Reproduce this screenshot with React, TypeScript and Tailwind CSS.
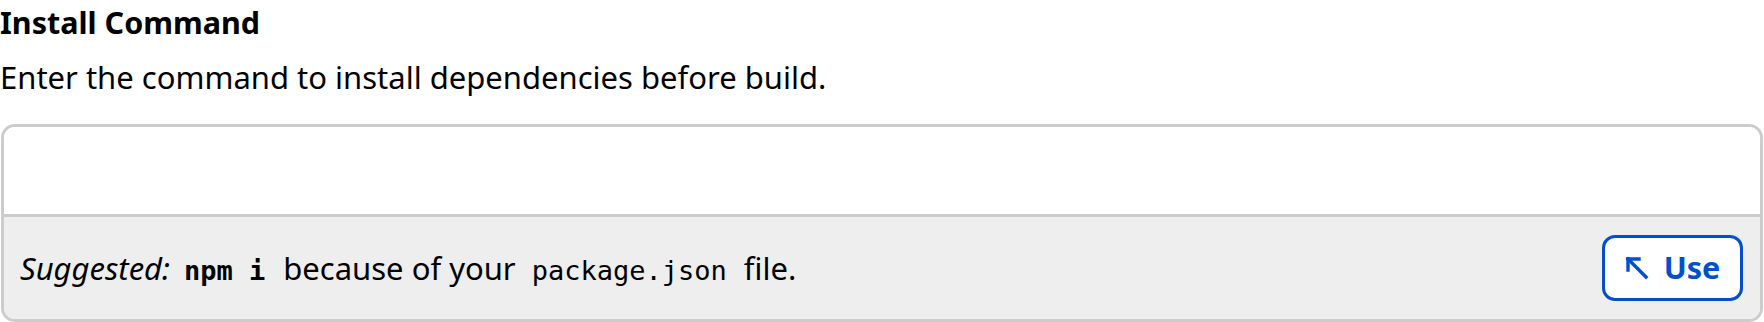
function ArrowIcon() {
  return (
    <svg width="24" height="24" viewBox="0 0 24 24" fill="none" stroke="currentColor" strokeWidth="3.4" strokeLinecap="square">
      <path d="M3 3 L21 21" />
      <path d="M3 3 H14" />
      <path d="M3 3 V14" />
    </svg>
  );
}

function InstallCommand() {
  return (
    <div className="font-['Noto_Sans',sans-serif] text-black bg-white w-[1764px] h-[322px] overflow-hidden">
      <h3 className="text-[30.5px] font-bold leading-[40px] pt-[2px]">Install Command</h3>
      <p className="text-[31px] leading-[40px] mt-[15px]">
        Enter the command to install dependencies before build.
      </p>
      <div className="mt-[27px] ml-[1px] mr-[1px] rounded-[14px] border-[3px] border-[#cccccc] overflow-hidden">
        <input
          type="text"
          className="block w-full h-[90px] bg-white border-b-[3px] border-[#cccccc] outline-none px-4 text-[31px]"
        />
        <div className="flex items-center justify-between h-[102px] bg-[#eeeeee] pl-[16px] pr-[17px]">
          <p className="text-[31px] flex items-baseline">
            <em>Suggested:</em>
            <code className="font-['DejaVu_Sans_Mono',monospace] font-bold text-[27px] ml-[14px] mr-[18px]">npm i</code>
            <span>because of your</span>
            <code className="font-['DejaVu_Sans_Mono',monospace] text-[27px] ml-[16px] mr-[17px]">package.json</code>
            <span>file.</span>
          </p>
          <button className="flex items-center gap-[15px] h-[66px] w-[141px] justify-center rounded-[13px] border-[3px] border-[#0050cc] bg-white text-[#0050cc] text-[30.5px] font-bold">
            <ArrowIcon />
            Use
          </button>
        </div>
      </div>
    </div>
  );
}

export default function App() {
  return <InstallCommand />;
}
